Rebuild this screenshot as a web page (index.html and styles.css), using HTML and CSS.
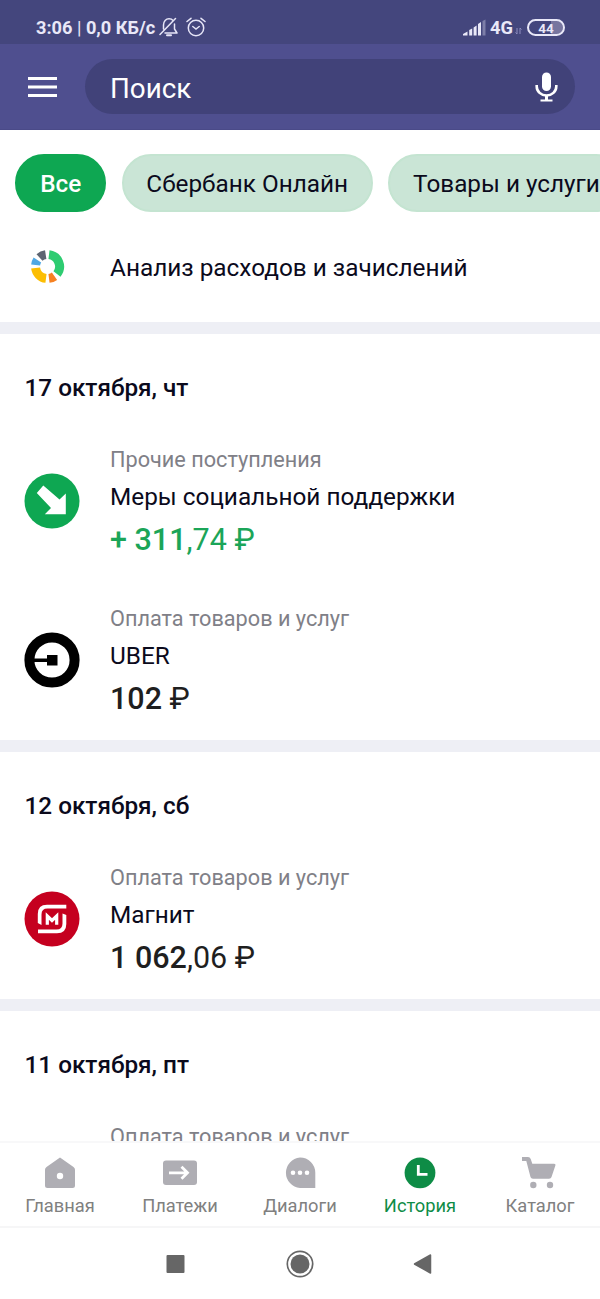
FILE: index.html
```html
<!DOCTYPE html>
<html lang="ru">
<head>
<meta charset="utf-8">
<title>История</title>
<link rel="stylesheet" href="styles.css">
</head>
<body>
<div class="phone">
  <div class="status">
    <div class="status-left">
      <span class="status-text">3:06 <span class="thin">|</span> 0,0 КБ/с</span>
      <svg class="bell" width="20" height="20" viewBox="0 0 20 20" fill="none" stroke="#e6e5f7" stroke-width="1.5" stroke-linecap="round" stroke-linejoin="round"><path d="M4.500 12V8C4.500 4 7 1.800 10 1.800c2 0 3.200 .6 4 1.700M15.500 7v5l2.500 4H6M16.500 1.500L1 17.500"/><path d="M8 18.200h4" stroke-width="2"/></svg>
      <svg class="alarm" width="20" height="20" viewBox="0 0 20 20" fill="none" stroke="#e6e5f7" stroke-width="1.5" stroke-linecap="round"><circle cx="10" cy="11" r="7.700"/><path d="M1 4.500L5 1.300M19 4.500L15 1.300M6.800 9.500L10 12l3.200-2.500"/></svg>
    </div>
    <div class="status-right">
      <svg class="signal" width="24" height="17" viewBox="0 0 24 17" fill="#e9e8f8"><path d="M0 16.500v-1.500l4.500-2.500v4zM6.200 11l3-1.500v7h-3zM10.600 8.500l3-2v10h-3zM15 5l3-2v13.500h-3z"/><path d="M19.500 2l3-1.500v16h-3z" opacity=".35"/></svg>
      <span class="net">4G</span>
      <svg class="data" width="7" height="8" viewBox="0 0 7 8" fill="none" stroke="#8f8dc0" stroke-width="1"><path d="M2 1v6M.5 5.500L2 7M5 7V1M6.500 2.500L5 1"/></svg>
      <span class="battery">44</span>
    </div>
  </div>
  <header class="toolbar">
    <svg class="menu" width="29" height="20" viewBox="0 0 29 20" fill="#fff"><path d="M0 0h29v3H0zM0 8.500h29v3H0zM0 17h29v3H0z"/></svg>
    <div class="search">
      <span>Поиск</span>
      <svg class="mic" width="23" height="30" viewBox="0 0 23 30"><rect x="7" y="0.500" width="9" height="18.500" rx="4.500" fill="#fff"/><path d="M1.700 13v1.500a9.800 9 0 0 0 19.600 0V13" fill="none" stroke="#fff" stroke-width="2.600"/><path d="M10 23h3v4.500h4.500v2h-12v-2H10z" fill="#fff"/></svg>
    </div>
  </header>
  <div class="feed">
    <div class="chips">
      <span class="chip chip-active">Все</span>
      <span class="chip">Сбербанк Онлайн</span>
      <span class="chip">Товары и услуги</span>
    </div>
    <div class="analysis">
      <svg class="donut" width="34" height="34" viewBox="-16.500 -16.500 34 34" fill="none" stroke-width="9"><path d="M1.500-11.900A12 12 0 0 1 9.500 7.400" stroke="#2ecc71"/><path d="M7 9.750A12 12 0 0 1 1.500 11.900" stroke="#f68121"/><path d="M-1.500 11.900A12 12 0 0 1-11.900 1.500" stroke="#fcbe03"/><path d="M-11.900-1.500A12 12 0 0 1-10.100-6.500" stroke="#50a8e4"/><path d="M-8-9A12 12 0 0 1-1.800-11.900" stroke="#5d6572"/></svg>
      <span>Анализ расходов и зачислений</span>
    </div>
    <section class="day">
      <h2>17 октября, чт</h2>
      <div class="item">
        <svg class="logo" width="56" height="56" viewBox="0 0 56 56"><circle cx="28" cy="28" r="27.500" fill="#0ea752"/><path d="M19.300 12.500L35.500 26.500L41.800 20.500V41.300H20.800L27 35L12.800 20z" fill="#fff"/></svg>
        <div class="info"><div class="category">Прочие поступления</div><div class="name">Меры социальной поддержки</div><div class="amount income"><b>+ 311</b>,74 ₽</div></div>
      </div>
      <div class="item">
        <svg class="logo" width="56" height="56" viewBox="0 0 56 56"><circle cx="28" cy="28" r="22.600" fill="#fff" stroke="#000" stroke-width="10"/><path d="M9 26.600h14v-3.600h10.500v10.500H23v-3.600H9z"/></svg>
        <div class="info"><div class="category">Оплата товаров и услуг</div><div class="name">UBER</div><div class="amount"><b>102</b> ₽</div></div>
      </div>
    </section>
    <section class="day">
      <h2>12 октября, сб</h2>
      <div class="item">
        <svg class="logo" width="56" height="56" viewBox="0 0 56 56"><circle cx="28" cy="28" r="27.500" fill="#c5001f"/><path d="M42.300 13.800V17.600H23.500Q17.500 17.600 17.500 23.500V34L13.800 32V23Q13.800 13.800 23 13.800zM14 42.300V38.500H32.500Q38.500 38.500 38.500 32.500V22.500L42.300 24V33Q42.300 42.300 33 42.300z" fill="#fff"/><path d="M23.300 33.700V25l4.700 4.500L32.700 25v8.700" fill="none" stroke="#fff" stroke-width="3.200"/></svg>
        <div class="info"><div class="category">Оплата товаров и услуг</div><div class="name">Магнит</div><div class="amount"><b>1 062</b>,06 ₽</div></div>
      </div>
    </section>
    <section class="day">
      <h2>11 октября, пт</h2>
      <div class="item"><div class="info info-only"><div class="category">Оплата товаров и услуг</div></div></div>
    </section>
  </div>
  <nav class="tabs">
    <div class="tab"><svg width="36" height="34" viewBox="0 0 36 34"><path d="M18 1.500L31.500 11Q33 12 33 13.800V29.500Q33 32 30.500 32H5.500Q3 32 3 29.500V13.800Q3 12 4.500 11z" fill="#afaeb4"/><circle cx="18" cy="20" r="3.200" fill="#fff"/></svg><span>Главная</span></div>
    <div class="tab"><svg width="36" height="34" viewBox="0 0 36 34"><rect x="1" y="4.500" width="34" height="24.500" rx="3" fill="#afaeb4"/><path d="M7 16.800h17.500M19.500 10.800l6 6-6 6" fill="none" stroke="#fff" stroke-width="2.800"/></svg><span>Платежи</span></div>
    <div class="tab"><svg width="36" height="34" viewBox="0 0 36 34"><path d="M18 1.500A15.300 15.300 0 0 1 33.300 16.800V32H18A15.300 15.300 0 0 1 18 1.500z" fill="#afaeb4"/><g fill="#fff"><circle cx="11" cy="16.800" r="2.300"/><circle cx="18" cy="16.800" r="2.300"/><circle cx="25" cy="16.800" r="2.300"/></g></svg><span>Диалоги</span></div>
    <div class="tab tab-active"><svg width="36" height="34" viewBox="0 0 36 34"><circle cx="18" cy="16.800" r="15.400" fill="#0e8c46"/><path d="M16.300 9v9.300H25.500" fill="none" stroke="#fff" stroke-width="2.800"/></svg><span>История</span></div>
    <div class="tab"><svg width="36" height="34" viewBox="0 0 36 34" fill="#afaeb4"><path d="M0 1H6Q8 1 8.700 3L10.300 7.700H32Q34 7.700 33.300 9.800L29.500 21Q29 22.800 27 22.800H11Q9 22.800 8.500 21L4.300 5H0z"/><circle cx="11.300" cy="29" r="3.200"/><circle cx="28" cy="29" r="3.200"/></svg><span>Каталог</span></div>
  </nav>
  <div class="system">
    <svg width="28" height="28" viewBox="0 0 28 28"><rect x="5.500" y="5" width="18" height="18" rx="1" fill="#666"/></svg>
    <svg width="28" height="28" viewBox="0 0 28 28"><circle cx="14" cy="14" r="12.700" fill="none" stroke="#666" stroke-width="1.700"/><circle cx="14" cy="14" r="9.500" fill="#666"/></svg>
    <svg width="28" height="28" viewBox="0 0 28 28"><path d="M19.500 5v18L3.500 14z" fill="#666" stroke="#666" stroke-width="1.500" stroke-linejoin="round"/></svg>
  </div>
</div>
</body>
</html>
```
FILE: styles.css
```css
* { box-sizing: border-box; }
body { margin: 0; font-family: Roboto, "Liberation Sans", sans-serif; background: #fff; color: #0b0a1c; }
svg { display: block; flex: none; }
.phone { width: 600px; height: 1299px; display: flex; flex-direction: column; overflow: hidden; }
.status { flex: none; height: 44px; background: #44467d; color: #e9e8f8; display: flex; justify-content: space-between; padding: 11px 35px 0 36px; }
.status-left, .status-right { display: flex; align-items: center; height: 32px; }
.status-text { font-size: 18.200px; font-weight: 700; white-space: nowrap; }
.thin { font-weight: 400; }
.bell { margin-left: 4px; }
.alarm { margin-left: 7px; }
.net { font-size: 18.300px; font-weight: 700; margin-left: 3px; }
.data { margin: 7px 5px 0 2px; }
.battery { width: 38px; height: 17px; border: 2px solid #e9e8f8; border-radius: 9px; background: linear-gradient(90deg, #44467d 65%, #77759f 65%) padding-box; font-size: 13.500px; font-weight: 700; line-height: 14px; text-align: center; }
.toolbar { flex: none; height: 86px; background: #4f4f8f; display: flex; align-items: center; padding: 0 25px 0 28px; border-bottom: 1px solid #4a4a88; }
.search { flex: 1; height: 55px; margin-left: 28px; border-radius: 28px; background: #414279; display: flex; align-items: center; justify-content: space-between; padding: 3px 17px 0 25px; color: #fff; font-size: 27.800px; }
.mic { margin-bottom: 3px; }
.feed { flex: 1; min-height: 0; overflow: hidden; }
.chips { display: flex; gap: 15.500px; padding: 24px 0 0 15.400px; }
.chip { flex: none; height: 58px; border-radius: 29px; border: 2px solid #c4e4d1; background: #cae5d6; padding: 1px 22.800px 0; font-size: 24.300px; line-height: 54px; white-space: nowrap; }
.chip-active { background: #0ea752; border-color: #0ea752; color: #fff; font-weight: 500; }
.analysis { height: 110px; display: flex; align-items: center; padding: 0 0 1px 31px; font-size: 24.350px; }
.analysis span { margin-left: 45px; padding-top: 1px; }
.day { border-top: 12px solid #eeeff5; }
h2 { margin: 0; height: 88px; padding-top: 10px; padding-left: 24.500px; line-height: 88px; font-size: 24.300px; font-weight: 500; }
.item { height: 159px; display: flex; padding: 24px 0 0 24px; }
.logo { margin-top: 27px; }
.info { margin-left: 30px; white-space: nowrap; }
.info-only { margin-left: 86px; }
.category { font-size: 21.700px; line-height: 28px; color: #808087; }
.name { margin-top: 6px; font-size: 24.350px; line-height: 34px; }
.amount { margin-top: 6px; font-size: 30.500px; line-height: 40px; color: #1f1f1f; }
.amount b { font-weight: 500; }
.income { color: #1ba558; }
.tabs { flex: none; height: 87px; display: flex; border-top: 2px solid #f8f8f9; border-bottom: 2px solid #f6f6f7; }
.tab { flex: 1; display: flex; flex-direction: column; align-items: center; padding-top: 13px; color: #808080; font-size: 18.300px; line-height: 24px; }
.tab span { margin-top: 4px; }
.tab-active { color: #0e8c46; }
.system { flex: none; height: 71px; display: flex; justify-content: center; align-items: center; gap: 97px; }
```
